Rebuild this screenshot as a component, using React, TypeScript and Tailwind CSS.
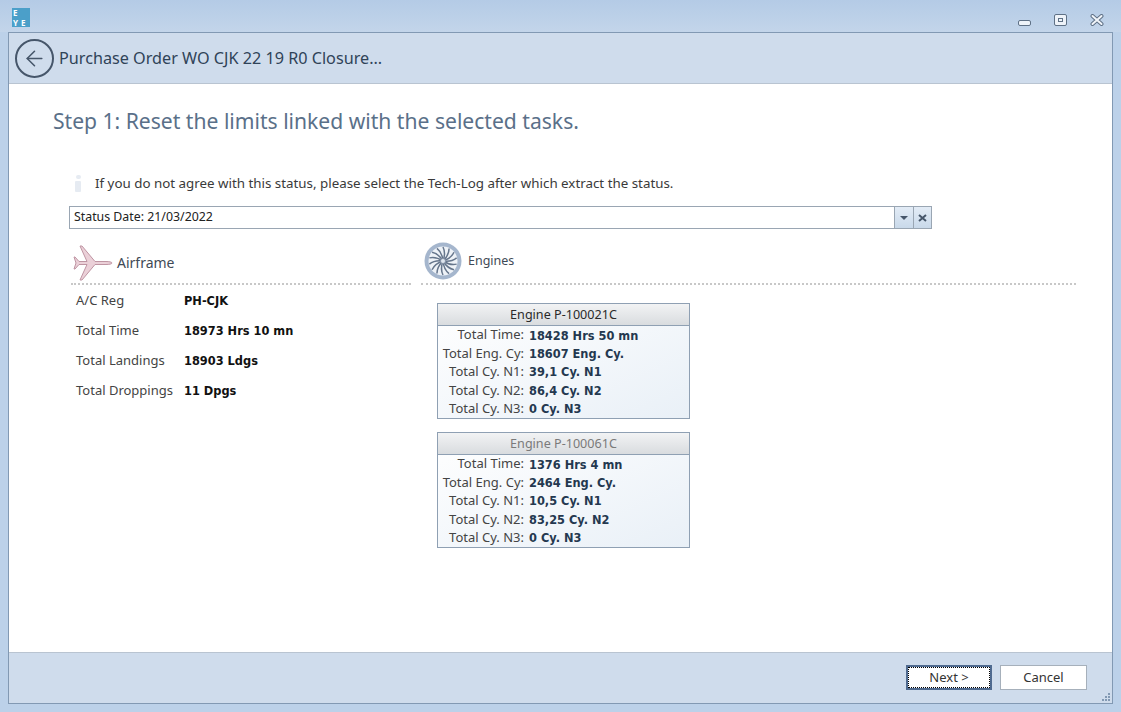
import { ArrowLeft } from "lucide-react";

const airframe = [
  ["A/C Reg", "PH-CJK"],
  ["Total Time", "18973 Hrs 10 mn"],
  ["Total Landings", "18903 Ldgs"],
  ["Total Droppings", "11 Dpgs"],
];

const engines = [
  {
    name: "Engine P-100021C",
    dim: false,
    rows: [
      ["Total Time:", "18428 Hrs 50 mn"],
      ["Total Eng. Cy:", "18607 Eng. Cy."],
      ["Total Cy. N1:", "39,1 Cy. N1"],
      ["Total Cy. N2:", "86,4 Cy. N2"],
      ["Total Cy. N3:", "0 Cy. N3"],
    ],
  },
  {
    name: "Engine P-100061C",
    dim: true,
    rows: [
      ["Total Time:", "1376 Hrs 4 mn"],
      ["Total Eng. Cy:", "2464 Eng. Cy."],
      ["Total Cy. N1:", "10,5 Cy. N1"],
      ["Total Cy. N2:", "83,25 Cy. N2"],
      ["Total Cy. N3:", "0 Cy. N3"],
    ],
  },
];

function PlaneIcon() {
  return (
    <svg width="40" height="36" viewBox="0 0 40 36">
      <path
        d="M39 18c0-1-3-1.500-6-1.500H22L9 1H7l7 15.500H6L2 12H1l2 6-2 6h1l4-4.500h8L7 35h2l13-15.500h11c3 0 6-.5 6-1.500z"
        fill="#ebd0d8"
        stroke="#bf95a3"
        strokeWidth="1"
      />
    </svg>
  );
}

function TurbineIcon() {
  const blades = Array.from({ length: 14 }, (_, i) => (i * 360) / 14);
  return (
    <svg width="38" height="38" viewBox="0 0 38 38">
      <circle cx="19" cy="19" r="18.500" fill="#a5b6cd" />
      <circle cx="19" cy="19" r="14.500" fill="#eef2f7" />
      {blades.map((a) => (
        <path
          key={a}
          d="M19 19 Q22 11 19 5"
          fill="none"
          stroke="#66768c"
          strokeWidth="1.500"
          transform={`rotate(${a} 19 19)`}
        />
      ))}
      <circle cx="19" cy="19" r="2.500" fill="#dfe6ef" stroke="#7d8ca1" strokeWidth="0.800" />
    </svg>
  );
}

function WindowButtons() {
  return (
    <div className="flex items-center gap-[23px] pr-[17px] pt-[5px]">
      <div className="mt-[7px] h-[6px] w-[13px] rounded-[2px] border border-[#5f7186] bg-[#eef3f9]" />
      <div className="flex h-[12px] w-[13px] items-center justify-center rounded-[2px] border border-[#5f7186] bg-[#eef3f9]">
        <div className="h-[4px] w-[5px] border border-[#5f7186]" />
      </div>
      <svg width="14" height="12" viewBox="0 0 14 12">
        <path d="M2.500 2 11.500 10M11.500 2 2.500 10" stroke="#5f7186" strokeWidth="4" strokeLinecap="round" />
        <path d="M2.500 2 11.500 10M11.500 2 2.500 10" stroke="#f1f5fa" strokeWidth="2" strokeLinecap="round" />
      </svg>
    </div>
  );
}

export default function App() {
  return (
    <div className="flex h-[712px] w-[1121px] flex-col overflow-hidden bg-[#bcd1e9] font-['Noto_Sans','Open_Sans',sans-serif] text-[12px] text-[#333]">
      {/* title bar */}
      <div className="flex h-[32px] shrink-0 items-start justify-between bg-gradient-to-b from-[#b4cbe6] to-[#c3d5ea] pl-[12px] pt-[8px]">
        <div className="grid h-[19px] w-[18px] grid-cols-2 bg-[#4b9fc9] text-[8px] font-bold leading-[9px] text-white">
          <span className="pl-[1px]">E</span>
          <span />
          <span className="pl-[1px]">Y</span>
          <span>E</span>
        </div>
        <WindowButtons />
      </div>

      <div className="mx-[8px] flex min-h-0 flex-1 flex-col border-x border-t border-[#8299b3] bg-white">
        {/* header */}
        <div className="flex h-[51px] shrink-0 items-center gap-[5px] border-b border-[#b9c4d1] bg-[#cfdcec] pl-[6px]">
          <div className="flex h-[39px] w-[39px] items-center justify-center rounded-full border-2 border-[#46566a]">
            <ArrowLeft size={25} strokeWidth={1.500} color="#46566a" />
          </div>
          <span className="text-[16.200px] text-[#2f4358]">Purchase Order WO CJK 22 19 R0 Closure...</span>
        </div>

        {/* body */}
        <div className="flex min-h-0 flex-1 flex-col">
          <h1 className="pl-[44px] pt-[20px] text-[21.100px] font-normal leading-[34px] text-[#5a7089]">
            Step 1: Reset the limits linked with the selected tasks.
          </h1>

          <div className="flex items-center gap-[14px] pl-[66px] pt-[35px] text-[13.350px] leading-[20px] text-[#3a3a3a]">
            <div className="flex h-[17px] w-[6px] flex-col items-center gap-[2px]">
              <div className="h-[4px] w-[5px] rounded-full bg-[#e6ebf2]" />
              <div className="h-[11px] w-[6px] rounded-[1px] bg-[#e6ebf2]" />
            </div>
            <span>If you do not agree with this status, please select the Tech-Log after which extract the status.</span>
          </div>

          <div className="ml-[60px] mt-[13px] flex h-[23px] w-[863px] border border-[#9aa6b3]">
            <div className="flex-1 pl-[4px] text-[12.350px] leading-[20px] text-[#222]">Status Date: 21/03/2022</div>
            <div className="flex w-[19px] items-center justify-center border-l border-[#9aa6b3] bg-gradient-to-b from-[#e3ecf6] to-[#c9d9ea]">
              <div className="h-0 w-0 border-x-[4px] border-t-[4px] border-x-transparent border-t-[#46566a]" />
            </div>
            <div className="flex w-[18px] items-center justify-center border-l border-[#9aa6b3] bg-gradient-to-b from-[#e3ecf6] to-[#c9d9ea]">
              <svg width="9" height="8" viewBox="0 0 9 8">
                <path d="M1 1 8 7M8 1 1 7" stroke="#46566a" strokeWidth="2" />
              </svg>
            </div>
          </div>

          <div className="flex pl-[62px] pt-[13px]">
            {/* airframe column */}
            <div className="w-[340px] shrink-0">
              <div className="flex h-[43px] items-center gap-[4px] border-b-2 border-dotted border-[#c8c8c8] pl-[2px]">
                <PlaneIcon />
                <span className="text-[14px] text-[#3f4a56]">Airframe</span>
              </div>
              <div className="flex flex-col gap-[10px] pl-[5px] pt-[6px]">
                {airframe.map(([label, value]) => (
                  <div key={label} className="flex h-[20px] items-center">
                    <span className="w-[108px] text-[13px] text-[#444]">{label}</span>
                    <span className="pt-[2px] font-['DejaVu_Sans',sans-serif] text-[11.400px] font-bold text-[#111]">
                      {value}
                    </span>
                  </div>
                ))}
              </div>
            </div>

            {/* engines column */}
            <div className="ml-[10px] w-[655px]">
              <div className="flex h-[43px] items-start gap-[6px] border-b-2 border-dotted border-[#c8c8c8] pl-[3px]">
                <TurbineIcon />
                <span className="pt-[10px] text-[12.500px] text-[#3f4a56]">Engines</span>
              </div>
              <div className="flex flex-col gap-[13px] pl-[16px] pt-[18px]">
                {engines.map((e) => (
                  <div key={e.name} className="w-[253px] border border-[#8fa0b3] bg-gradient-to-br from-white to-[#e9f0f7]">
                    <div
                      className={`h-[22px] border-b border-[#8fa0b3] bg-gradient-to-b from-[#f2f3f4] to-[#d9dcdf] text-center text-[12.600px] leading-[21px] ${
                        e.dim ? "text-[#7a7a7a]" : "text-[#2a2a2a]"
                      }`}
                    >
                      {e.name}
                    </div>
                    <div className="flex flex-col">
                      {e.rows.map(([label, value]) => (
                        <div key={label} className="flex h-[18.400px] items-center">
                          <span className="w-[86px] whitespace-nowrap text-right text-[13px] text-[#444]">{label}</span>
                          <span className="pl-[5px] pt-[2px] font-['DejaVu_Sans',sans-serif] text-[11.400px] font-bold text-[#24384f]">
                            {value}
                          </span>
                        </div>
                      ))}
                    </div>
                  </div>
                ))}
              </div>
            </div>
          </div>
        </div>

        {/* footer */}
        <div className="relative flex h-[52px] shrink-0 items-center justify-end gap-[8px] border-b border-t border-b-[#8299b3] border-t-[#b9c4d1] bg-[#cfdcec] pb-[2px] pr-[25px]">
          <button className="h-[25px] w-[86px] border-2 border-[#4f6a8f] bg-white pt-[1px] text-[13px] text-[#333] outline-1 -outline-offset-3 outline-dotted outline-black">
            Next &gt;
          </button>
          <button className="h-[25px] w-[87px] border border-[#a6b0bb] bg-white pt-[1px] text-[13px] text-[#333]">Cancel</button>
          <div className="absolute bottom-[2px] right-[2px] grid grid-cols-3 gap-[1px]">
            {[0, 0, 1, 0, 1, 1, 1, 1, 1].map((on, i) => (
              <div key={i} className={`h-[2px] w-[2px] ${on ? "bg-[#8299b3]" : ""}`} />
            ))}
          </div>
        </div>
      </div>
      <div className="h-[8px] shrink-0 bg-[#bcd1e9]" />
    </div>
  );
}
